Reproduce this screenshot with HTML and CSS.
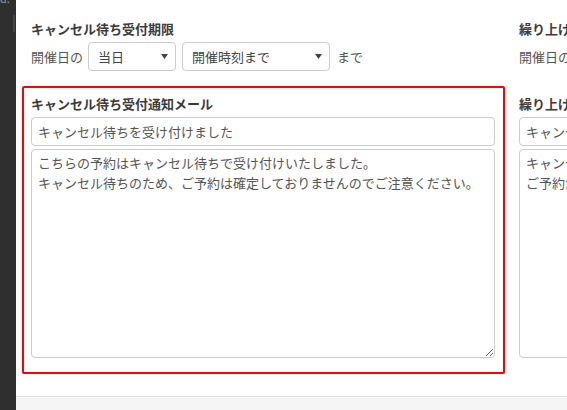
FILE: index.html
```html
<!DOCTYPE html>
<html lang="ja">
<head>
<meta charset="utf-8">
<title>キャンセル待ち設定</title>
<link rel="stylesheet" href="styles.css">
</head>
<body>
<div class="app">
  <aside class="sidebar">
    <span class="sb-text">d:</span>
    <span class="sb-scroll"></span>
  </aside>
  <main class="main">
    <div class="content">
      <div class="row row-top">
        <div class="col">
          <h3 class="heading">キャンセル待ち受付期限</h3>
          <div class="line">
            <span class="label">開催日の</span>
            <div class="select select-day"><span>当日</span><svg class="caret" width="7" height="5" viewBox="0 0 7 5"><path d="M0 0H7L3.5 5Z" fill="#444"/></svg></div>
            <div class="select select-time"><span>開催時刻まで</span><svg class="caret" width="7" height="5" viewBox="0 0 7 5"><path d="M0 0H7L3.5 5Z" fill="#444"/></svg></div>
            <span class="label label-end">まで</span>
          </div>
        </div>
        <div class="col">
          <h3 class="heading">繰り上げ受付期限</h3>
          <div class="line">
            <span class="label">開催日の</span>
            <div class="select select-day"><span>当日</span><svg class="caret" width="7" height="5" viewBox="0 0 7 5"><path d="M0 0H7L3.5 5Z" fill="#444"/></svg></div>
          </div>
        </div>
      </div>
      <div class="row row-mail">
        <div class="col highlight">
          <h3 class="heading">キャンセル待ち受付通知メール</h3>
          <input class="field" type="text" value="キャンセル待ちを受け付けました">
          <textarea class="area">こちらの予約はキャンセル待ちで受け付けいたしました。
キャンセル待ちのため、ご予約は確定しておりませんのでご注意ください。</textarea>
        </div>
        <div class="col">
          <h3 class="heading">繰り上げ受付通知メール</h3>
          <input class="field" type="text" value="キャンセル待ちから繰り上げになりました">
          <textarea class="area">キャンセル待ちから繰り上げになりました。
ご予約が確定しましたのでご来場ください。</textarea>
        </div>
      </div>
    </div>
    <div class="footer"></div>
  </main>
</div>
</body>
</html>
```

FILE: styles.css
```css
html, body {
  margin: 0;
  padding: 0;
  width: 567px;
  height: 410px;
  overflow: hidden;
  background: #fff;
}

body {
  font-family: "Noto Sans CJK JP", "Noto Sans", sans-serif;
  font-size: 13px;
  color: #555;
}

.app {
  display: flex;
  height: 410px;
}

.sidebar {
  position: relative;
  width: 16px;
  flex-shrink: 0;
  background: #2f2f2f;
  overflow: hidden;
}

.sb-text {
  position: absolute;
  left: 0;
  top: -9px;
  font-size: 11px;
  color: #9a9a9a;
  line-height: 14px;
}

.sb-scroll {
  position: absolute;
  left: 13px;
  top: 15px;
  width: 2px;
  height: 17px;
  background: #454545;
}

.main {
  flex: 1;
  min-width: 0;
  display: flex;
  flex-direction: column;
  overflow: hidden;
}

.content {
  flex: 1;
  padding: 11px 0 0 6px;
}

.row {
  display: flex;
  gap: 5px;
}

.col {
  width: 483px;
  flex-shrink: 0;
  box-sizing: border-box;
  border: 2px solid transparent;
  border-radius: 2px;
  padding: 6px 8px 14px 7px;
  display: flex;
  flex-direction: column;
}

.row-top .col {
  padding-bottom: 13px;
}

.highlight {
  border-color: #f00;
}

.heading {
  margin: 0 0 3px;
  font-size: 13px;
  line-height: 20px;
  font-weight: bold;
  color: #3c3c3c;
  white-space: nowrap;
}

.line {
  display: flex;
  align-items: center;
  height: 29px;
  white-space: nowrap;
}

.label {
  color: #555;
  line-height: 20px;
}

.label-end {
  margin-left: 7px;
}

.select {
  box-sizing: border-box;
  height: 29px;
  border: 1px solid #ccc;
  border-radius: 4px;
  background: #fff;
  display: flex;
  align-items: center;
  justify-content: space-between;
  padding: 0 7px 0 9px;
  color: #444;
  flex-shrink: 0;
}

.select-day {
  width: 88px;
  margin-left: 5px;
}

.select-time {
  width: 148px;
  margin-left: 6px;
}

.caret {
  display: block;
}

.field {
  box-sizing: border-box;
  width: 100%;
  height: 29px;
  margin: 0 0 3px;
  padding: 0 6px;
  border: 1px solid #ccc;
  border-radius: 4px;
  font-family: inherit;
  font-size: 13px;
  color: #555;
  background: #fff;
  outline: none;
}

.area {
  box-sizing: border-box;
  width: 100%;
  height: 209px;
  margin: 0;
  padding: 3px 6px;
  border: 1px solid #ccc;
  border-radius: 4px;
  font-family: inherit;
  font-size: 13px;
  line-height: 20px;
  color: #555;
  background: #fff;
  outline: none;
  resize: vertical;
  white-space: pre-wrap;
  overflow: hidden;
}

.footer {
  height: 13px;
  flex-shrink: 0;
  border-top: 1px solid #ddd;
  background: #f5f5f5;
}
```
